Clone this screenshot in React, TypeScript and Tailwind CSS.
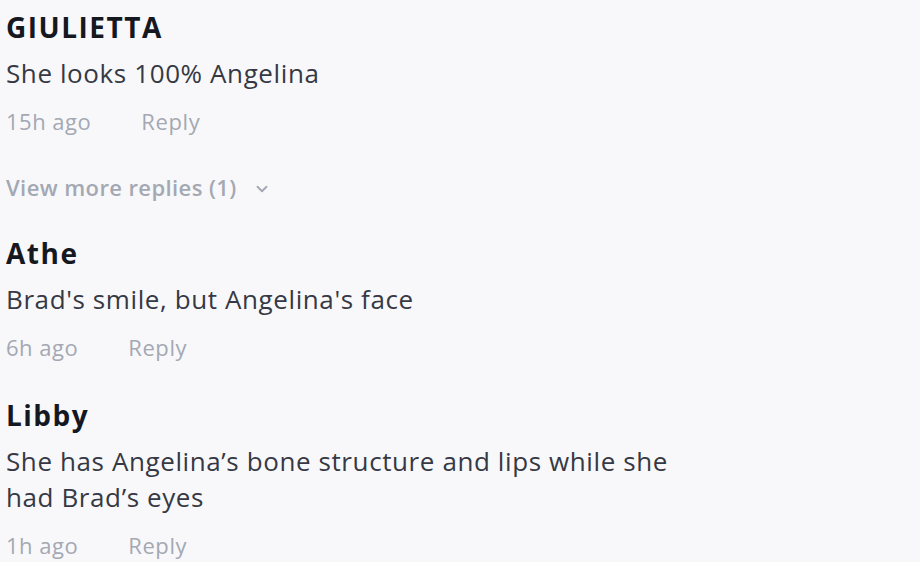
import { ChevronDown } from 'lucide-react';

type Comment = {
  author: string;
  body: string;
  time: string;
  moreReplies?: number;
};

const comments: Comment[] = [
  { author: 'GIULIETTA', body: 'She looks 100% Angelina', time: '15h ago', moreReplies: 1 },
  { author: 'Athe', body: "Brad's smile, but Angelina's face", time: '6h ago' },
  {
    author: 'Libby',
    body: 'She has Angelina\u2019s bone structure and lips while she had Brad\u2019s eyes',
    time: '1h ago',
  },
];

function CommentItem({ c }: { c: Comment }) {
  return (
    <div className="flex flex-col">
      <div className="text-[28px] leading-[34px] font-bold tracking-[1.5px] text-[#161821]">{c.author}</div>
      <p className="mt-[11px] max-w-[700px] text-[26px] leading-[36px] tracking-[0.6px] text-[#363944]">{c.body}</p>
      <div className="mt-[13px] flex items-center gap-[50px] text-[22px] leading-[34px] tracking-[0.5px] text-[#a3a8b3]">
        <span>{c.time}</span>
        <button className="text-[#a3a8b3] tracking-[0.6px]">Reply</button>
      </div>
      {c.moreReplies ? (
        <button className="mt-[34px] flex items-center gap-[16px] text-[22px] leading-[30px] font-semibold tracking-[0.4px] text-[#a3a8b3]">
          View more replies ({c.moreReplies})
          <ChevronDown className="w-[18px] h-[18px] mt-[3px]" strokeWidth={2.5} />
        </button>
      ) : null}
    </div>
  );
}

export default function App() {
  return (
    <div
      className="w-[920px] h-[562px] overflow-hidden bg-[#f8f8fa] px-[6px] pt-[10px] flex flex-col gap-[34px]"
      style={{ fontFamily: '"Open Sans", "Liberation Sans", sans-serif' }}
    >
      {comments.map((c, i) => (
        <CommentItem key={i} c={c} />
      ))}
    </div>
  );
}
